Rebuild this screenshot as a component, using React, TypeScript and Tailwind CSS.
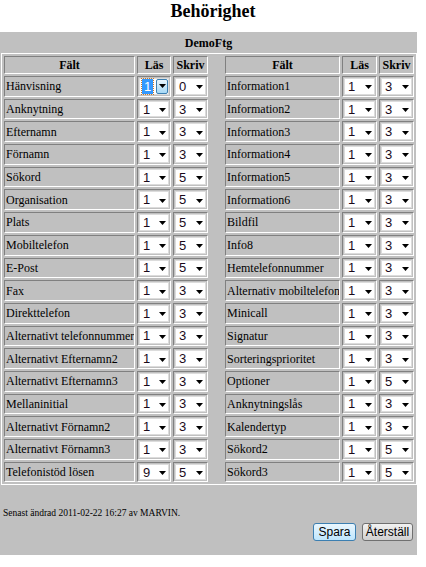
import React from "react";

type Row = [string, string, string];

const left: Row[] = [
  ["Hänvisning", "1", "0"],
  ["Anknytning", "1", "3"],
  ["Efternamn", "1", "3"],
  ["Förnamn", "1", "3"],
  ["Sökord", "1", "5"],
  ["Organisation", "1", "5"],
  ["Plats", "1", "5"],
  ["Mobiltelefon", "1", "5"],
  ["E-Post", "1", "5"],
  ["Fax", "1", "3"],
  ["Direkttelefon", "1", "3"],
  ["Alternativt telefonnummer", "1", "3"],
  ["Alternativt Efternamn2", "1", "3"],
  ["Alternativt Efternamn3", "1", "3"],
  ["Mellaninitial", "1", "3"],
  ["Alternativt Förnamn2", "1", "3"],
  ["Alternativt Förnamn3", "1", "3"],
  ["Telefonistöd lösen", "9", "5"],
];

const right: Row[] = [
  ["Information1", "1", "3"],
  ["Information2", "1", "3"],
  ["Information3", "1", "3"],
  ["Information4", "1", "3"],
  ["Information5", "1", "3"],
  ["Information6", "1", "3"],
  ["Bildfil", "1", "3"],
  ["Info8", "1", "3"],
  ["Hemtelefonnummer", "1", "3"],
  ["Alternativ mobiltelefon", "1", "3"],
  ["Minicall", "1", "3"],
  ["Signatur", "1", "3"],
  ["Sorteringsprioritet", "1", "3"],
  ["Optioner", "1", "5"],
  ["Anknytningslås", "1", "3"],
  ["Kalendertyp", "1", "3"],
  ["Sökord2", "1", "5"],
  ["Sökord3", "1", "5"],
];

// inset cell border, like an old IE table with border=1
const cell =
  "border border-t-[#808080] border-l-[#808080] border-b-white border-r-white bg-[#c0c0c0] min-w-0";

function Arrow() {
  return (
    <svg width="7" height="4" viewBox="0 0 7 4" className="block">
      <polygon points="0,0 7,0 3.5,4" fill="#000" />
    </svg>
  );
}

function Sel({ v, focused = false }: { v: string; focused?: boolean }) {
  return (
    <div className="relative flex h-full w-full items-center border border-[#dcdcdc] bg-white pl-[2px] font-['Liberation_Sans',Arial,sans-serif] text-[13px] leading-none text-[#1a0a1a]">
      {focused ? (
        <span className="bg-[#3399ff] px-[2px] py-[1px] text-white outline-1 outline-dotted outline-[#c8782a]">
          {v}
        </span>
      ) : (
        <span className="pl-[1px]">{v}</span>
      )}
      {focused ? (
        <span className="absolute top-0 right-0 bottom-0 flex w-[12px] items-center justify-center rounded-[2px] border border-[#3c7fb1] bg-linear-to-b from-[#eaf6fd] to-[#a7d9f5]">
          <Arrow />
        </span>
      ) : (
        <span className="absolute top-1/2 right-[2px] mt-[1px] -translate-y-1/2">
          <Arrow />
        </span>
      )}
    </div>
  );
}

function Cells({ r, first }: { r: Row; first?: boolean }) {
  return (
    <>
      <div className={`${cell} flex items-center overflow-hidden whitespace-nowrap pl-[1px]`}>{r[0]}</div>
      <div className={`${cell} p-[1px]`}>
        <Sel v={r[1]} focused={first} />
      </div>
      <div className={`${cell} p-[1px]`}>
        <Sel v={r[2]} />
      </div>
    </>
  );
}

function Head() {
  return (
    <>
      <div className={`${cell} flex items-center justify-center font-bold`}>Fält</div>
      <div className={`${cell} flex items-center justify-center font-bold`}>Läs</div>
      <div className={`${cell} flex items-center justify-center font-bold`}>Skriv</div>
    </>
  );
}

export default function App() {
  return (
    <div className="min-h-[567px] w-[426px] bg-white font-['Liberation_Serif','Times_New_Roman',serif] text-black">
      <h1 className="h-[32px] pt-[2px] text-center text-[18px] leading-[19px] font-bold">Behörighet</h1>

      <div className="w-[417px] bg-[#c0c0c0] pt-[4px] pb-[14px]">
        <div className="text-center text-[12px] leading-[14px] font-bold">DemoFtg</div>

        <div className="mt-[3px] ml-[1px] grid w-[416px] grid-cols-[131px_34px_35px_13px_115px_35px_35px] grid-rows-[18px_repeat(18,20.7px)] gap-[2px] border border-white p-[2px] text-[12px] leading-none">
          <Head />
          <div />
          <Head />
          {left.map((r, i) => (
            <React.Fragment key={r[0]}>
              <Cells r={r} first={i === 0} />
              <div />
              <Cells r={right[i]} />
            </React.Fragment>
          ))}
        </div>

        <p className="mt-[23px] pl-[3px] text-[9.5px] leading-[11px]">Senast ändrad 2011-02-22 16:27 av MARVIN.</p>

        <div className="mt-[4px] flex justify-end gap-[6px] pr-[4px] font-['Liberation_Sans',Arial,sans-serif] text-[12px]">
          <button className="h-[18px] w-[43px] rounded-[3px] border border-[#3c7fb1] bg-linear-to-b from-[#eaf6fd] to-[#bee6fd] leading-none">
            Spara
          </button>
          <button className="h-[18px] w-[51px] rounded-[3px] border border-[#707070] bg-linear-to-b from-[#f2f2f2] to-[#d0d0d0] leading-none">
            Återställ
          </button>
        </div>
      </div>
    </div>
  );
}
